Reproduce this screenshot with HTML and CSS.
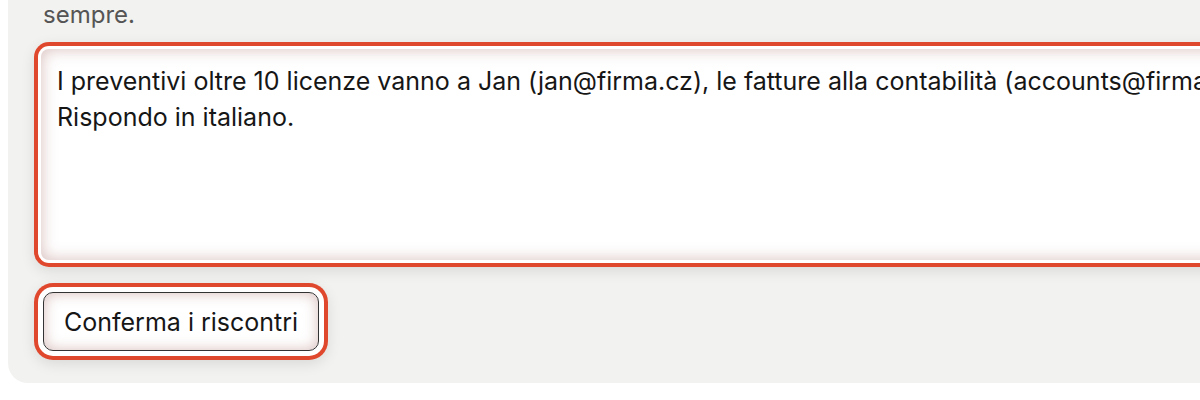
FILE: index.html
```html
<!DOCTYPE html>
<html lang="it">
<head>
    <meta charset="UTF-8">
    <title>Istruzioni</title>
    <link rel="stylesheet" href="styles.css">
</head>
<body>
<div class="card">
    <p class="hint">sempre.</p>
    <textarea class="notes" rows="5">I preventivi oltre 10 licenze vanno a Jan (jan@firma.cz), le fatture alla contabilità (accounts@firma.cz).
Rispondo in italiano.</textarea>
    <div class="actions">
        <button class="btn">Conferma i riscontri</button>
    </div>
</div>
</body>
</html>
```

FILE: styles.css
```css
body {
    margin: 0;
    overflow: hidden;
    background: #ffffff;
    font-family: Inter, "Noto Sans", sans-serif;
}

.card {
    margin: 0 -200px 0 8px;
    padding: 0 0 32px 33px;
    background: #f2f2f0;
    border-radius: 0 0 0 20px;
}

.hint {
    margin: 0 0 0 2px;
    height: 30px;
    line-height: 30px;
    font-size: 24px;
    color: #555555;
}

.notes {
    display: block;
    box-sizing: border-box;
    width: 1400px;
    height: 211px;
    margin-top: 19px;
    padding: 14px 16px;
    border: none;
    border-radius: 8px;
    background: #ffffff;
    font-family: Inter, "Noto Sans", sans-serif;
    font-size: 25px;
    line-height: 36px;
    color: #161616;
    resize: none;
    outline: none;
    box-shadow: inset 0 0 16px rgba(140, 70, 60, 0.35),
        0 0 0 3px #ffffff,
        0 0 0 7px #e0482d,
        0 4px 14px 7px rgba(0, 0, 0, 0.1);
}

.actions {
    margin-top: 32px;
    padding-left: 2px;
}

.btn {
    height: 59px;
    padding: 0 20px;
    border: 1px solid #333333;
    border-radius: 10px;
    background: #ffffff;
    font-family: Inter, "Noto Sans", sans-serif;
    font-size: 25px;
    color: #161616;
    cursor: pointer;
    box-shadow: inset 0 0 14px rgba(140, 70, 60, 0.35),
        0 0 0 5px #ffffff,
        0 0 0 9px #e0482d,
        0 4px 14px 9px rgba(0, 0, 0, 0.1);
}
```
